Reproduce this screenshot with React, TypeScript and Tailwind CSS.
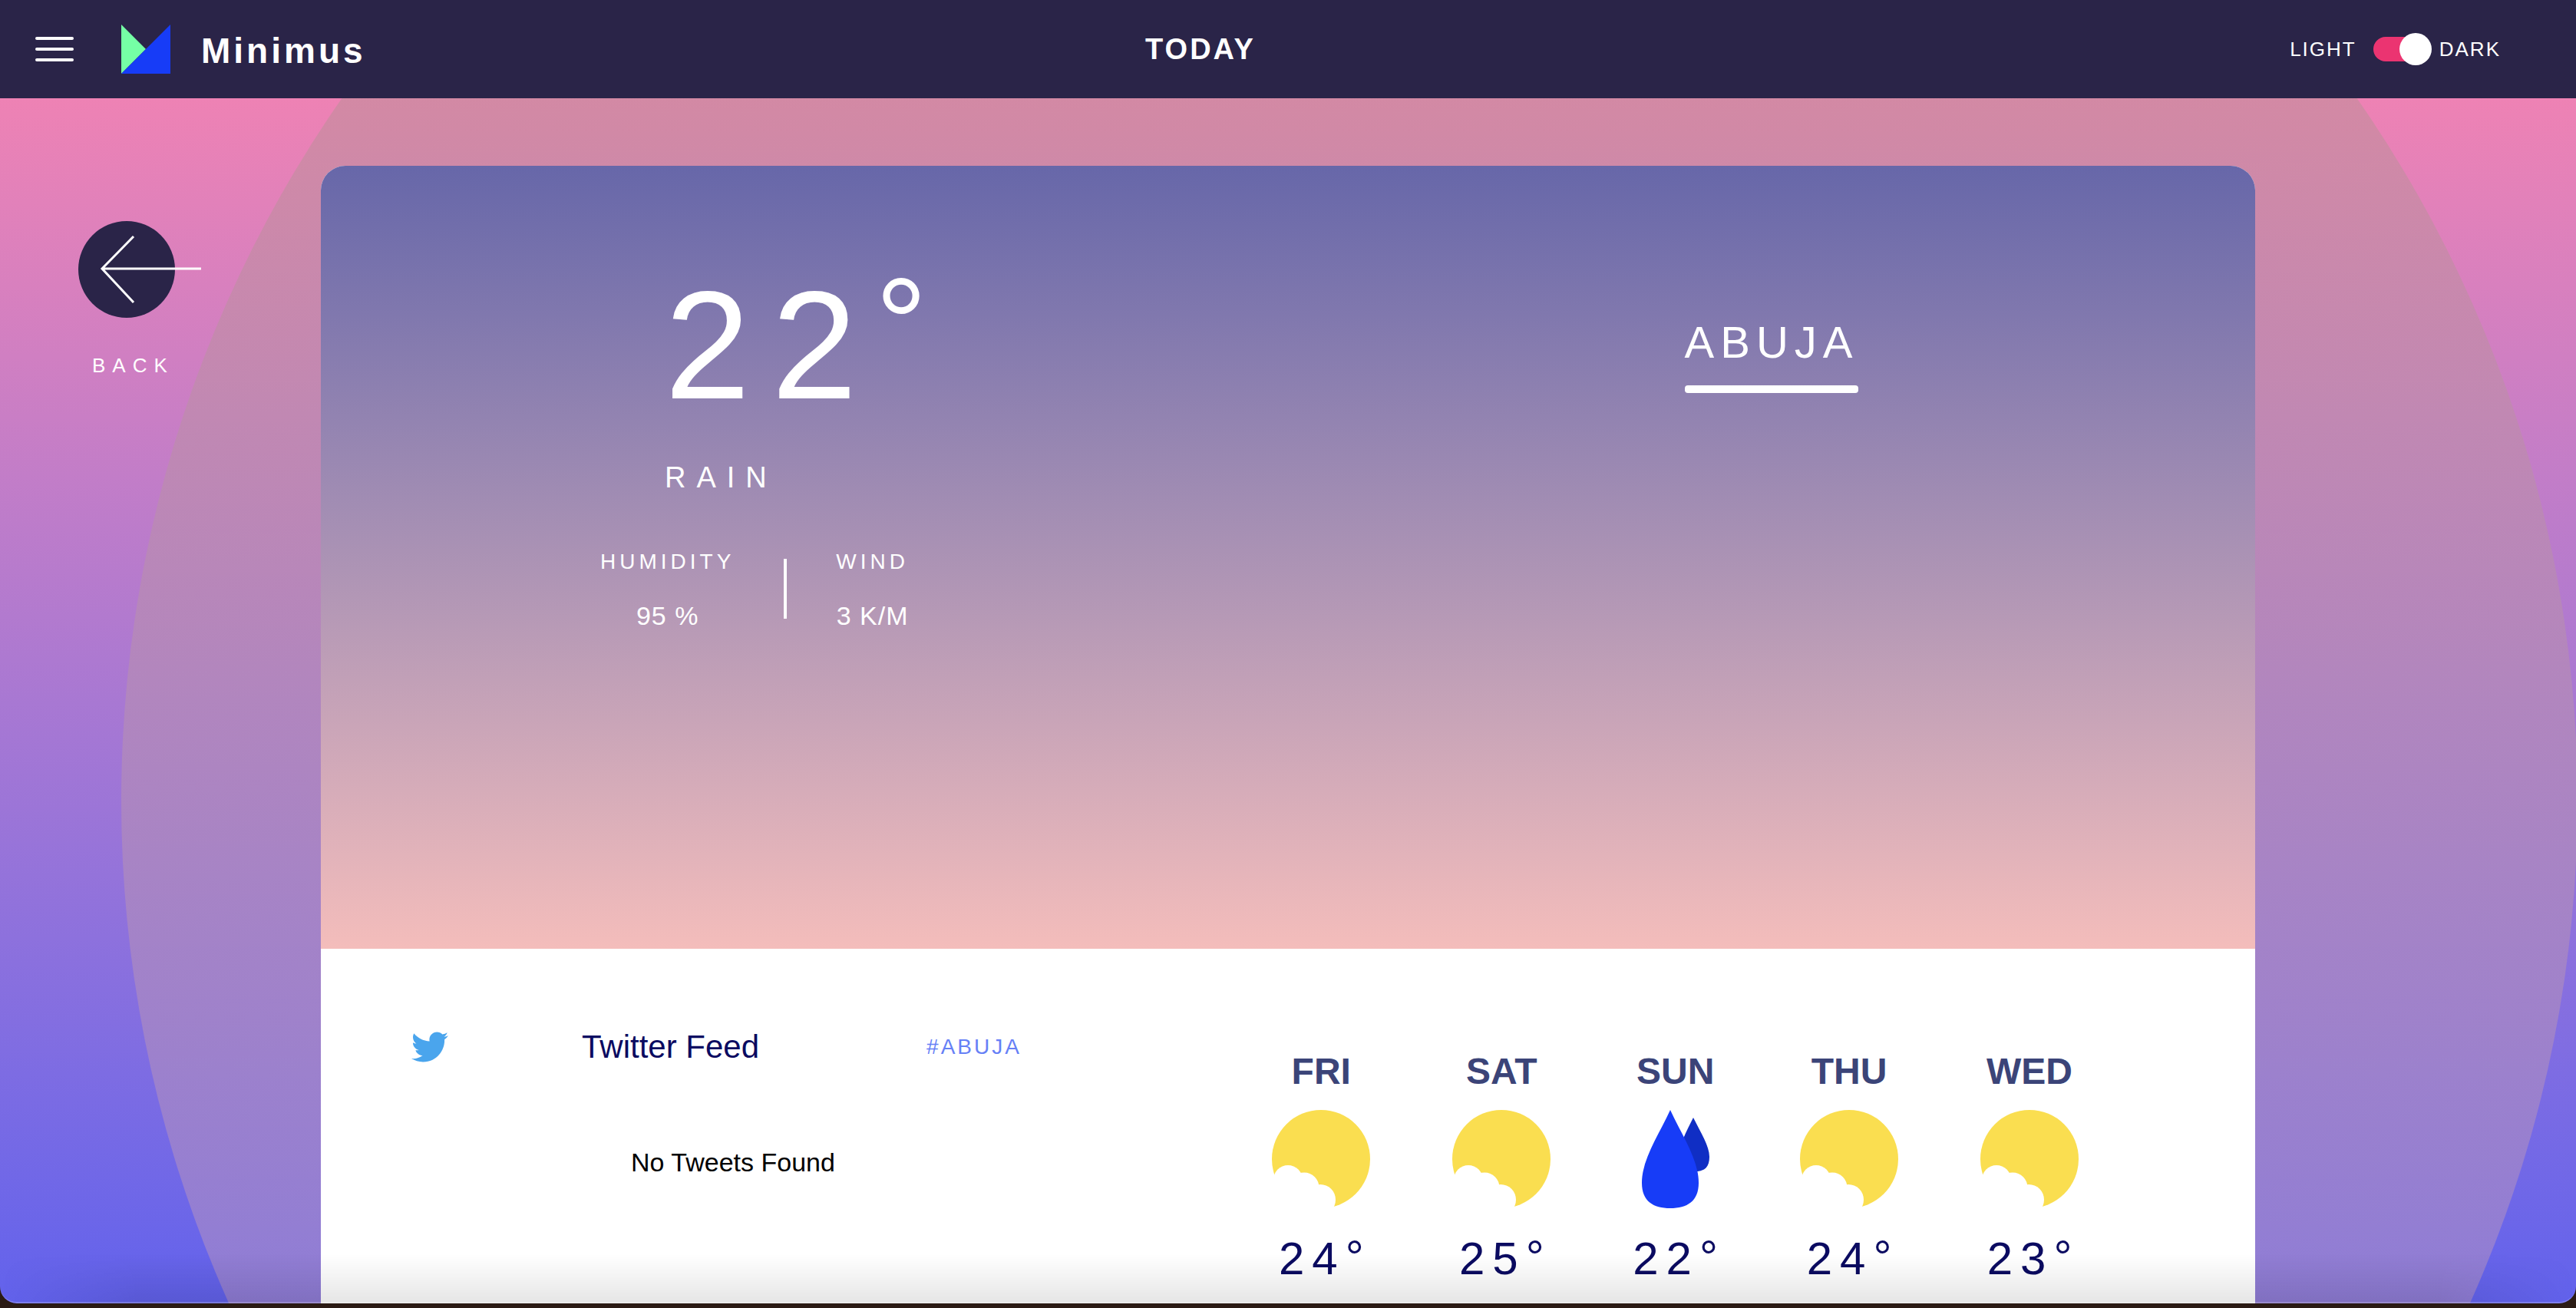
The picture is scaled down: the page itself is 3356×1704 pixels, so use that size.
import { FaTwitter } from "react-icons/fa";

type Weather = "sun" | "rain";

const forecast: { day: string; weather: Weather; temp: number }[] = [
  { day: "FRI", weather: "sun", temp: 24 },
  { day: "SAT", weather: "sun", temp: 25 },
  { day: "SUN", weather: "rain", temp: 22 },
  { day: "THU", weather: "sun", temp: 24 },
  { day: "WED", weather: "sun", temp: 23 },
];

function Logo() {
  return (
    <svg className="size-16" viewBox="0 0 64 64" aria-hidden="true">
      <path d="M0 0 L32 32 L0 64 Z" fill="#75ffa5" />
      <path d="M64 0 V64 H0 Z" fill="#173cf7" />
    </svg>
  );
}

function SunIcon() {
  return (
    <svg className="size-32" viewBox="0 0 128 128" aria-hidden="true">
      <circle cx="64" cy="64" r="64" fill="#fade50" />
      <g fill="#ffffff">
        <circle cx="21" cy="91" r="19" />
        <circle cx="42" cy="101" r="19.5" />
        <circle cx="63" cy="117" r="20" />
        <path d="M-2 86 L21 91 L63 117 L79 134 H-2 Z" />
      </g>
    </svg>
  );
}

function RainIcon() {
  return (
    <svg className="h-32 w-[88px]" viewBox="0 0 88 128" aria-hidden="true">
      <path d="M67 10 C77 30 88 47 88 61 C88 74 82 80 70 80 C56 80 48 74 48 61 C48 47 58 28 67 10 Z" fill="#102ec4" />
      <path d="M37 0 C52 33 74 64 74 95 C74 119 59 128 37 128 C15 128 0 119 0 95 C0 64 22 33 37 0 Z" fill="#173cf7" />
    </svg>
  );
}

function Header() {
  return (
    <header className="grid h-32 grid-cols-3 items-center bg-[#2a2448] pr-[98px] pl-[46px]">
      <div className="flex items-center">
        <button type="button" aria-label="Open menu" className="flex w-[50px] flex-col gap-[10px]">
          <span className="h-1 rounded-full bg-white" />
          <span className="h-1 rounded-full bg-white" />
          <span className="h-1 rounded-full bg-white" />
        </button>
        <a href="#home" className="ml-[62px] flex items-center gap-10">
          <Logo />
          <span className="pt-1 text-[46px] leading-[56px] font-bold tracking-[4px]">Minimus</span>
        </a>
      </div>
      <h1 className="pr-[176px] text-center text-[38px] leading-[48px] font-bold tracking-[3px]">TODAY</h1>
      <label className="flex items-center justify-end text-[26px] leading-8 tracking-[2px]">
        <span>LIGHT</span>
        <input type="checkbox" role="switch" aria-label="Dark theme" defaultChecked className="peer sr-only" />
        <span className="mr-[10px] ml-[22px] flex h-8 w-[76px] items-center justify-end rounded-full bg-[linear-gradient(90deg,#eb3471_0_60px,transparent_60px)]">
          <span className="size-[42px] shrink-0 rounded-full bg-white" />
        </span>
        <span>DARK</span>
      </label>
    </header>
  );
}

function BackButton() {
  return (
    <button type="button" className="absolute top-40 left-[102px] flex flex-col items-start text-white">
      <svg className="h-32 w-40" viewBox="0 0 160 128" aria-hidden="true">
        <circle cx="63" cy="63" r="63" fill="#2a2448" />
        <path d="M160 62 H31 M72 20 L31 62 L72 106" fill="none" stroke="#ffffff" strokeWidth="3" />
      </svg>
      <span className="mt-[44px] ml-[18px] text-[26px] leading-8 tracking-[9px]">BACK</span>
    </button>
  );
}

function Stat({ label, value }: { label: string; value: string }) {
  return (
    <div className="flex flex-col items-center gap-[34px]">
      <dt className="text-[28px] leading-8 tracking-[5px]">{label}</dt>
      <dd className="text-[34px] leading-10 tracking-[1px]">{value}</dd>
    </div>
  );
}

function CurrentWeather() {
  return (
    <section className="grid grid-cols-2 bg-linear-to-b from-[#6767a9] to-[#f4bdbb] pt-[110px] pb-[414px]">
      <div className="pl-[364px]">
        <p className="flex pl-[84px] text-[200px] leading-[248px] tracking-[28px]">
          22<span className="-ml-1 text-[168px] leading-[192px] tracking-normal">°</span>
        </p>
        <p className="mt-6 pl-[84px] text-[38px] leading-[48px] tracking-[14px]">RAIN</p>
        <dl className="mt-[70px] flex">
          <Stat label="HUMIDITY" value="95 %" />
          <div className="mx-[64px] mt-3 h-[78px] w-1 bg-white" />
          <Stat label="WIND" value="3 K/M" />
        </dl>
      </div>
      <div className="flex justify-center pt-[84px]">
        <h2 className="h-fit text-[58px] leading-[72px] tracking-[8px]">
          ABUJA
          <span className="mt-5 block h-[10px] rounded-sm bg-white" />
        </h2>
      </div>
    </section>
  );
}

function TwitterFeed() {
  return (
    <section className="flex-1 pt-[102px]">
      <div className="flex items-center">
        <FaTwitter className="size-12 text-[#4aa5ed]" aria-hidden="true" />
        <h2 className="ml-[174px] text-[42px] leading-[52px] text-[#0b0b61]">Twitter Feed</h2>
        <a href="#abuja" className="ml-[218px] text-[28px] leading-9 tracking-[3px] text-[#6680f6]">#ABUJA</a>
      </div>
      <p className="mt-[104px] pl-[286px] text-[34px] leading-10 text-black">No Tweets Found</p>
    </section>
  );
}

function Forecast() {
  return (
    <ul className="flex gap-[107px] pt-[130px] pb-40 text-[#0b0b61]">
      {forecast.map(({ day, weather, temp }) => (
        <li key={day} className="flex flex-col items-center">
          <h3 className="text-[48px] leading-[60px] font-bold text-[#3b4478]">{day}</h3>
          <div className="mt-5">{weather === "sun" ? <SunIcon /> : <RainIcon />}</div>
          <p className="mt-8 flex text-[60px] leading-[68px] tracking-[10px]">
            {temp}
            <span className="leading-[64px] tracking-normal">°</span>
          </p>
        </li>
      ))}
    </ul>
  );
}

export default function App() {
  return (
    <div className="h-screen overflow-hidden bg-[#2b1b14] pb-[6px] font-['Liberation_Sans',Arial,sans-serif] text-white">
      <div className="relative flex h-full flex-col overflow-hidden rounded-b-[22px]">
        <Header />
        <main className="relative flex-1 overflow-hidden bg-linear-to-b from-[#ee82b4] to-[#6262ec] px-[418px] pt-[88px]">
          <div className="absolute top-[-685px] left-[158px] size-[3200px] rounded-full bg-linear-to-b from-[#b68d82] to-[#be9ad8] opacity-50" />
          <BackButton />
          <article className="relative overflow-hidden rounded-t-[32px] bg-white">
            <CurrentWeather />
            <div className="flex pr-[230px] pl-[118px]">
              <TwitterFeed />
              <Forecast />
            </div>
          </article>
        </main>
        <div className="pointer-events-none absolute inset-x-0 bottom-0 h-16 bg-linear-to-t from-black/10 to-transparent [mask-image:linear-gradient(90deg,transparent,black_180px,black_calc(100%-180px),transparent)]" />
        <div className="pointer-events-none absolute inset-x-0 bottom-0 h-8 rounded-b-[22px] border-b-2 border-white/20" />
      </div>
    </div>
  );
}
